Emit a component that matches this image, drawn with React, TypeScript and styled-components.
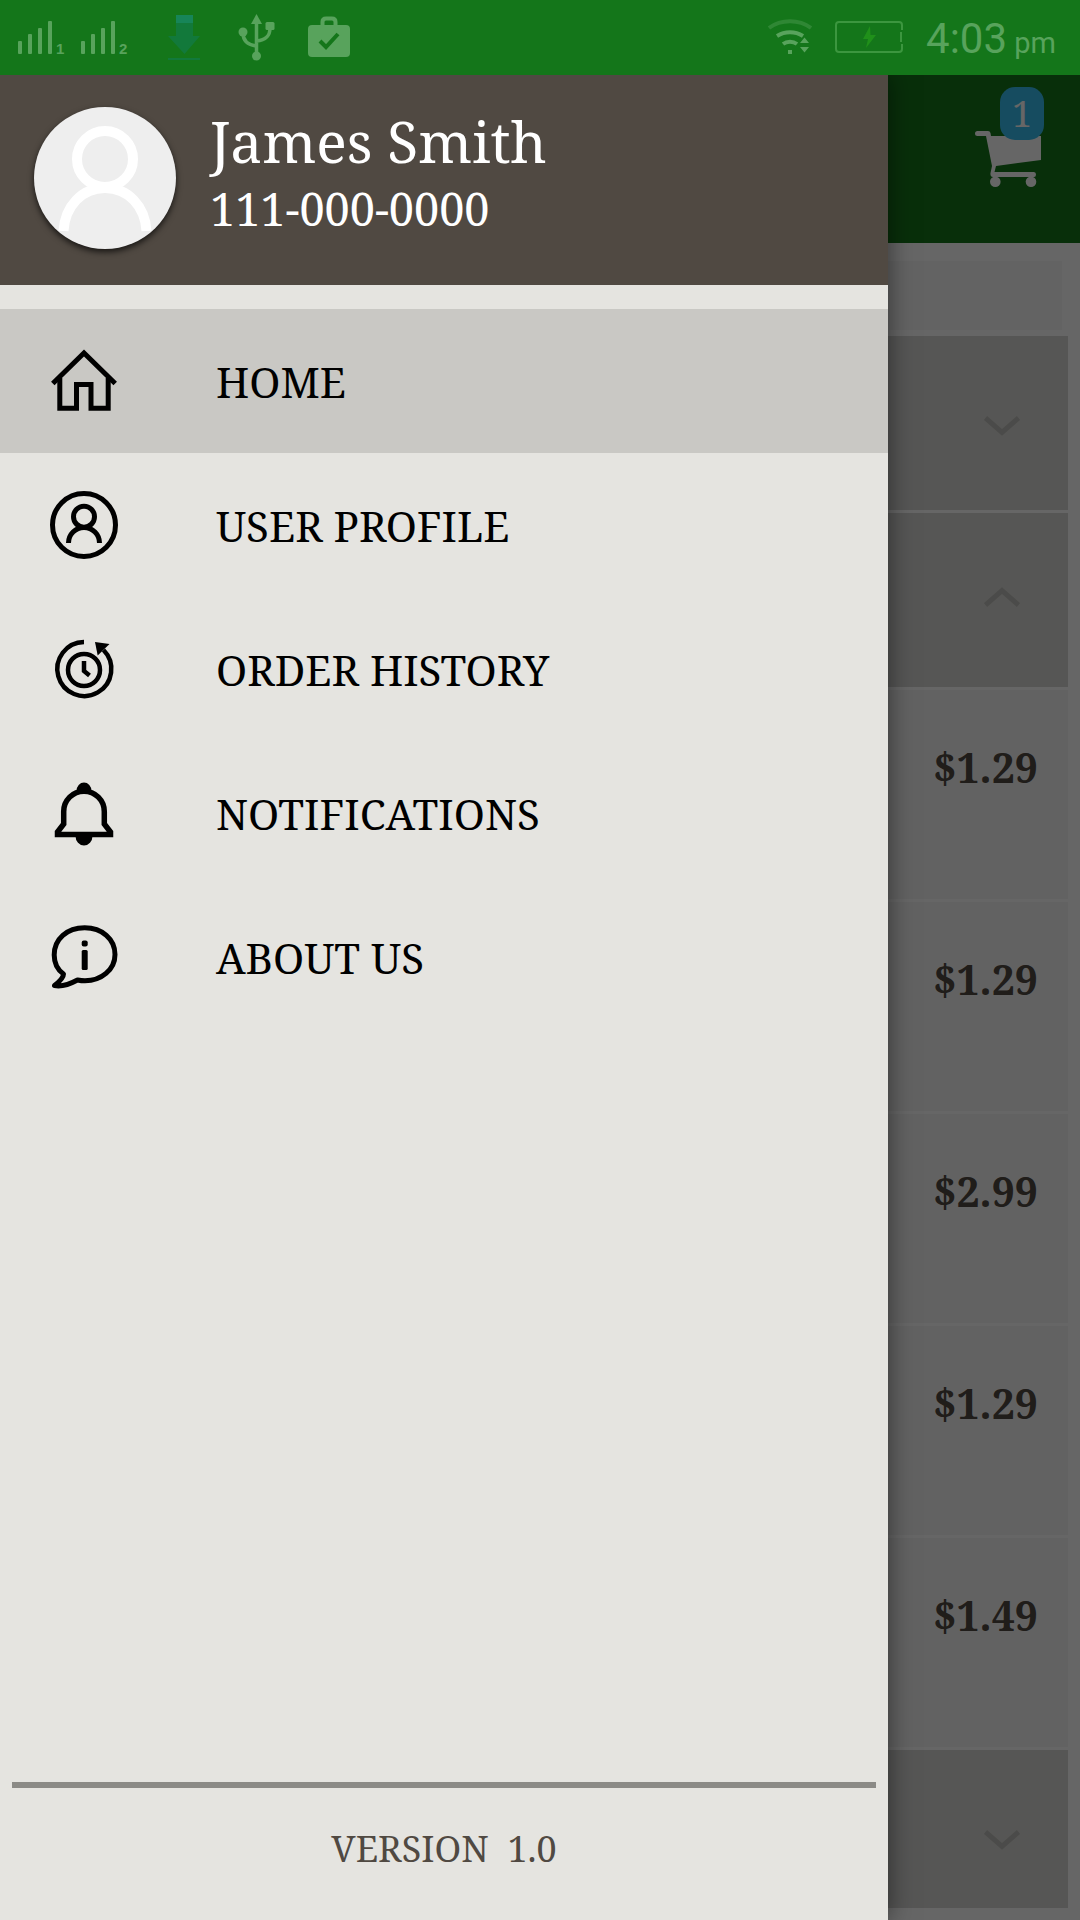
import React from "react";
import styled, { createGlobalStyle } from "styled-components";

const serif = `"Noto Serif", "Droid Serif", "Liberation Serif", serif`;
const brown = "#504942";
const green = "#14761a";

const GlobalStyle = createGlobalStyle`
  * { box-sizing: border-box; }
  body { margin: 0; background: #fff; font-family: ${serif}; }
  button { font: inherit; border: 0; padding: 0; background: none; cursor: pointer; }
  svg { display: block; flex: none; }
`;

const Screen = styled.div`
  position: relative;
  display: flex;
  flex-direction: column;
  height: 100vh;
  overflow: hidden;
`;

const StatusBar = styled.header`
  display: flex;
  justify-content: space-between;
  height: 75px;
  padding: 0 24px 0 18px;
  background: ${green};
  color: #58a35c;
`;

const StatusGroup = styled.div<{ $gap: number }>`
  display: flex;
  align-items: center;
  gap: ${(p) => p.$gap}px;
`;

const Signal = styled.div`
  display: flex;
  align-items: flex-end;
  gap: 4px;
  width: 46px;
  font: bold 15px/16px "Liberation Sans", sans-serif;
`;

const Clock = styled.time`
  padding-top: 6px;
  font: 42px/48px Roboto, sans-serif;
  white-space: pre;
`;

const Meridiem = styled.span`
  font-size: 29px;
`;

const Main = styled.div`
  position: relative;
  display: flex;
  flex: 1;
  flex-direction: column;
  min-height: 0;
  overflow: hidden;
`;

const AppBar = styled.div`
  display: flex;
  flex: none;
  align-items: center;
  justify-content: flex-end;
  height: 168px;
  padding-right: 36px;
  background: ${green};
`;

const CartButton = styled.button`
  position: relative;
  color: #fff;
`;

const Badge = styled.span`
  position: absolute;
  top: -40px;
  right: 0;
  width: 44px;
  padding-top: 1px;
  border-radius: 15px;
  background: #38bdf0;
  font-size: 36px;
  line-height: 52px;
  text-align: center;
`;

const SearchBox = styled.input`
  flex: none;
  height: 69px;
  margin: 18px 18px 6px;
  border: 0;
  background: #f7f7f7;
`;

const Catalog = styled.div`
  display: flex;
  flex: 1;
  flex-direction: column;
  gap: 3px;
  min-height: 0;
  margin: 0 12px 12px;
  overflow: hidden;
`;

const GroupRow = styled.button`
  display: flex;
  flex: none;
  align-items: center;
  justify-content: flex-end;
  height: 174px;
  padding-right: 48px;
  background: #d8d8d4;
  color: #bcbcb8;
`;

const Products = styled.ul`
  flex: none;
  margin: 0;
  padding: 0;
  list-style: none;
  background: #f6f6f6;
`;

const Product = styled.li`
  height: 209px;
  padding: 53px 30px 0 0;
  color: ${brown};
  font-size: 41px;
  font-weight: bold;
  line-height: 48px;
  text-align: right;

  &:not(:last-child) {
    height: 212px;
    border-bottom: 3px solid #fff;
  }
`;

const Scrim = styled.div`
  position: absolute;
  inset: 0;
  background: rgba(0, 0, 0, 0.6);
`;

const Drawer = styled.aside`
  position: absolute;
  inset: 0 192px 0 0;
  display: flex;
  flex-direction: column;
  background: #e5e4e0;
  box-shadow: 0 0 24px rgba(0, 0, 0, 0.5);
`;

const Profile = styled.div`
  display: flex;
  gap: 34px;
  height: 210px;
  padding: 32px 34px;
  background: ${brown};
  color: #fff;
`;

const Avatar = styled.div`
  width: 142px;
  height: 142px;
  overflow: hidden;
  border-radius: 50%;
  background: #eee;
  box-shadow: 0 3px 6px rgba(0, 0, 0, 0.7);
`;

const UserName = styled.div`
  font-size: 57px;
  line-height: 68px;
`;

const Phone = styled.div`
  font-size: 45px;
  line-height: 68px;
`;

const Menu = styled.nav`
  display: flex;
  flex: 1;
  flex-direction: column;
  padding-top: 24px;
`;

const MenuItem = styled.a<{ $active?: boolean }>`
  display: flex;
  align-items: center;
  gap: 92px;
  height: 144px;
  padding-left: 44px;
  background: ${(p) => (p.$active ? "#c9c8c4" : "transparent")};
  color: #000;
  font-size: 42px;
  line-height: 48px;
  text-decoration: none;
`;

const MenuLabel = styled.span`
  padding-top: 2px;
`;

const Version = styled.footer`
  margin: 0 12px;
  padding: 37px 0 47px;
  border-top: 6px solid #8b8a86;
  color: ${brown};
  font-size: 36px;
  line-height: 48px;
  text-align: center;
  white-space: pre;
`;

const SignalIcon = ({ sim }: { sim: number }) => (
  <Signal>
    <svg width="34" height="38" fill="currentColor">
      <rect y="22" width="4" height="13" rx="1" />
      <rect x="10" y="15" width="4" height="20" rx="1" />
      <rect x="20" y="9" width="4" height="26" rx="1" />
      <rect x="30" y="2" width="4" height="33" rx="1" />
    </svg>
    <span>{sim}</span>
  </Signal>
);

const Chevron = ({ up }: { up?: boolean }) => (
  <svg width="36" height="36" fill="none" stroke="currentColor" strokeWidth="5">
    <path d={up ? "M1.5 23L18 8.500L34.500 23" : "M1.5 13L18 27.500L34.500 13"} />
  </svg>
);

const icons = {
  home: (
    <>
      <path d="M8.800 42.500L40 12L71.200 42.500" />
      <path d="M15.800 37V67.200H32.500V43.500H47V67.200H64.200V37" />
    </>
  ),
  user: (
    <>
      <circle cx="40" cy="40" r="31.5" />
      <circle cx="40" cy="31.700" r="10.5" />
      <path d="M24.500 58A15.500 15.500 0 0 1 55.500 58" />
    </>
  ),
  history: (
    <g strokeWidth="4.5">
      <path d="M40 13A27 27 0 1 0 59.500 21" />
      <path d="M51 13L65.500 15L53.700 26.500Z" fill="currentColor" stroke="none" />
      <circle cx="40" cy="41" r="16" />
      <path d="M40 32V42L45.500 46.500" />
    </g>
  ),
  bell: (
    <>
      <path
        strokeWidth="5.5"
        d="M13.500 61.500V59L19.700 51V38.500A20.300 20.300 0 0 1 60.300 38.500V51L66.500 59V61.500Z"
      />
      <path
        fill="currentColor"
        stroke="none"
        d="M32.500 18A7.500 8.500 0 0 1 47.500 18ZM31.500 63A8.500 9.500 0 0 0 48.500 63Z"
      />
    </>
  ),
  about: (
    <>
      <path
        strokeLinejoin="round"
        d="M19.500 57C12.500 52 10.200 45 10.200 38C10.200 22 23 10.800 40.700 10.800C58 10.800 71 22 71 37.500C71 53 57 63.800 41 63.800C38 63.800 36 63.500 33.500 63C27 66.500 18 70 10.500 68.500C15 65 19.500 61 19.500 57Z"
      />
      <g fill="currentColor" stroke="none">
        <rect x="37.700" y="23.500" width="6" height="6" rx="2" />
        <rect x="37.700" y="33" width="6" height="20" rx="1.5" />
      </g>
    </>
  ),
};

const menu: { icon: keyof typeof icons; label: string }[] = [
  { icon: "home", label: "HOME" },
  { icon: "user", label: "USER PROFILE" },
  { icon: "history", label: "ORDER HISTORY" },
  { icon: "bell", label: "NOTIFICATIONS" },
  { icon: "about", label: "ABOUT US" },
];

const prices = ["$1.29", "$1.29", "$2.99", "$1.29", "$1.49"];

export default function App() {
  return (
    <Screen>
      <GlobalStyle />
      <StatusBar>
        <StatusGroup $gap={33}>
          <StatusGroup $gap={17}>
            <SignalIcon sim={1} />
            <SignalIcon sim={2} />
          </StatusGroup>
          <svg width="45" height="75" viewBox="160 0 45 75">
            <path fill="#12793b" d="M176 15H193V36H200L184.500 54L168 36H176ZM168 58H200V60H168Z" />
            <path fill="#178558" d="M176 15H193V23H176Z" />
          </svg>
          <svg width="37" height="75" viewBox="238 0 37 75" fill="none" stroke="currentColor" strokeWidth="3.5">
            <path d="M256.500 22V55M243 33C243 41 248 45 256.500 46M270 28C270 36 266 40 256.500 41" />
            <g fill="currentColor" stroke="none">
              <path d="M256.500 14L262 24H251Z" />
              <circle cx="256.500" cy="56" r="4.500" />
              <circle cx="243" cy="32" r="4.500" />
              <rect x="265.500" y="22" width="9" height="8" rx="1.5" />
            </g>
          </svg>
          <svg width="42" height="75" viewBox="308 0 42 75">
            <rect x="308" y="25" width="42" height="32" rx="4" fill="currentColor" />
            <path d="M322.500 25V22Q322.500 18.500 326 18.500H332Q335.500 18.500 335.500 22V25" fill="none" stroke="currentColor" strokeWidth="4" />
            <path d="M320 41L326 47L338 34" fill="none" stroke={green} strokeWidth="4" />
          </svg>
        </StatusGroup>
        <StatusGroup $gap={23}>
          <svg width="44" height="75" viewBox="768 0 44 75" fill="none" stroke="currentColor" strokeWidth="4">
            <path d="M769 28C781 19 799 19 811 28" opacity="0.4" />
            <path d="M777 36C785 31 795 31 803 36M783 44C787 41 793 41 797 44" />
            <g fill="currentColor" stroke="none">
              <rect x="788" y="50" width="4" height="4" />
              <path d="M800 43L804.500 37.500L809 43ZM800 47L804.500 52.500L809 47Z" />
            </g>
          </svg>
          <svg width="68" height="75" viewBox="836 0 68 75">
            <path
              fill="none"
              stroke="#3c963f"
              strokeWidth="2"
              d="M903 30V25Q903 22 900 22H840Q837 22 837 25V49Q837 52 840 52H900Q903 52 903 49V44M902 32V42"
            />
            <path fill="#20901a" d="M871 26L864 39H869L867 48L877 35H871.500Z" />
          </svg>
          <Clock>
            4:03<Meridiem>{" pm"}</Meridiem>
          </Clock>
        </StatusGroup>
      </StatusBar>

      <Main>
        <AppBar>
          <CartButton aria-label="Cart">
            <svg width="72" height="64" viewBox="972 127 72 64" fill="currentColor">
              <path d="M987 136H1041V160L996 166L994.500 172H1034Q1036 172 1036 174.500T1034 177H993Q990 177 990.500 173L992 166L986 136H977.500Q975 136 975 133.500T977.500 131H988Q990 131 990.500 133L991 136Z" />
              <circle cx="995.300" cy="181.700" r="5.300" />
              <circle cx="1031" cy="181.700" r="5.300" />
            </svg>
            <Badge>1</Badge>
          </CartButton>
        </AppBar>
        <SearchBox type="search" aria-label="Search" />
        <Catalog>
          <GroupRow aria-label="Expand group">
            <Chevron />
          </GroupRow>
          <GroupRow aria-label="Collapse group">
            <Chevron up />
          </GroupRow>
          <Products>
            {prices.map((price, i) => (
              <Product key={i}>{price}</Product>
            ))}
          </Products>
          <GroupRow aria-label="Expand group">
            <Chevron />
          </GroupRow>
        </Catalog>
        <Scrim />
        <Drawer>
          <Profile>
            <Avatar>
              <svg width="142" height="142" fill="none" stroke="#fff" strokeWidth="10">
                <circle cx="71" cy="52" r="28" />
                <path d="M29.500 124C31 99 48 81 71 81S111 99 112.500 124" />
              </svg>
            </Avatar>
            <div>
              <UserName>James Smith</UserName>
              <Phone>111-000-0000</Phone>
            </div>
          </Profile>
          <Menu>
            {menu.map(({ icon, label }, i) => (
              <MenuItem key={icon} href="#" $active={i === 0}>
                <svg width="80" height="80" fill="none" stroke="currentColor" strokeWidth="5">
                  {icons[icon]}
                </svg>
                <MenuLabel>{label}</MenuLabel>
              </MenuItem>
            ))}
          </Menu>
          <Version>{"VERSION  1.0"}</Version>
        </Drawer>
      </Main>
    </Screen>
  );
}
